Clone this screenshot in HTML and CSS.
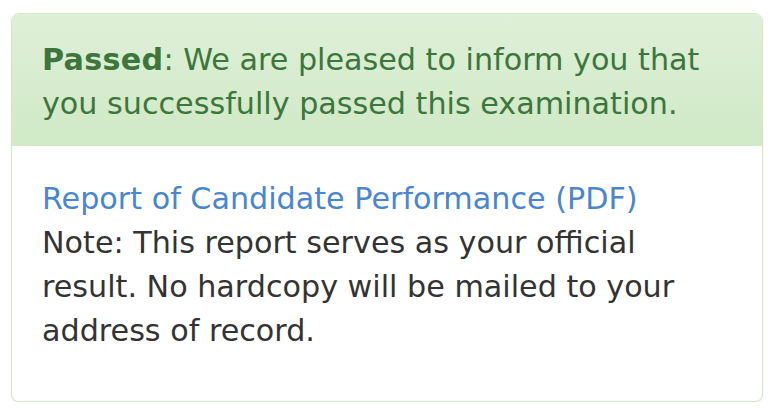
FILE: index.html
```html
<!DOCTYPE html>
<html>
<head>
<meta charset="utf-8">
<link rel="stylesheet" href="styles.css">
</head>
<body>
<div class="panel">
  <div class="panel-heading"><strong>Passed</strong>: We are pleased to inform you that you successfully passed this examination.</div>
  <div class="panel-body">
    <a href="#" class="report-link">Report of Candidate Performance (PDF)</a><br>
    Note: This report serves as your official result. No hardcopy will be mailed to your address of record.
  </div>
</div>
</body>
</html>
```
FILE: styles.css
```css
html, body {
  margin: 0;
  padding: 0;
  background: #fff;
}
body {
  padding: 13px 10px 0 11px;
  font-family: "DejaVu Sans", Verdana, sans-serif;
  font-size: 30.2px;
  line-height: 44px;
  color: #333;
}
.panel {
  width: 752px;
  height: 389px;
  box-sizing: border-box;
  border: 1px solid #d6e9c6;
  border-radius: 8px;
  box-shadow: 0 1px 2px rgba(0,0,0,0.08);
  overflow: hidden;
  background: #fff;
}
.panel-heading {
  padding: 24px 30px 19px;
  background: linear-gradient(#dff0d8, #d0e9c6);
  color: #3c763d;
  border-bottom: 1px solid #d6e9c6;
}
.panel-heading strong {
  letter-spacing: 0.3px;
}
.panel-body {
  padding: 31px 60px 0 30px;
}
.report-link {
  color: #4a86cf;
  text-decoration: none;
}
```
